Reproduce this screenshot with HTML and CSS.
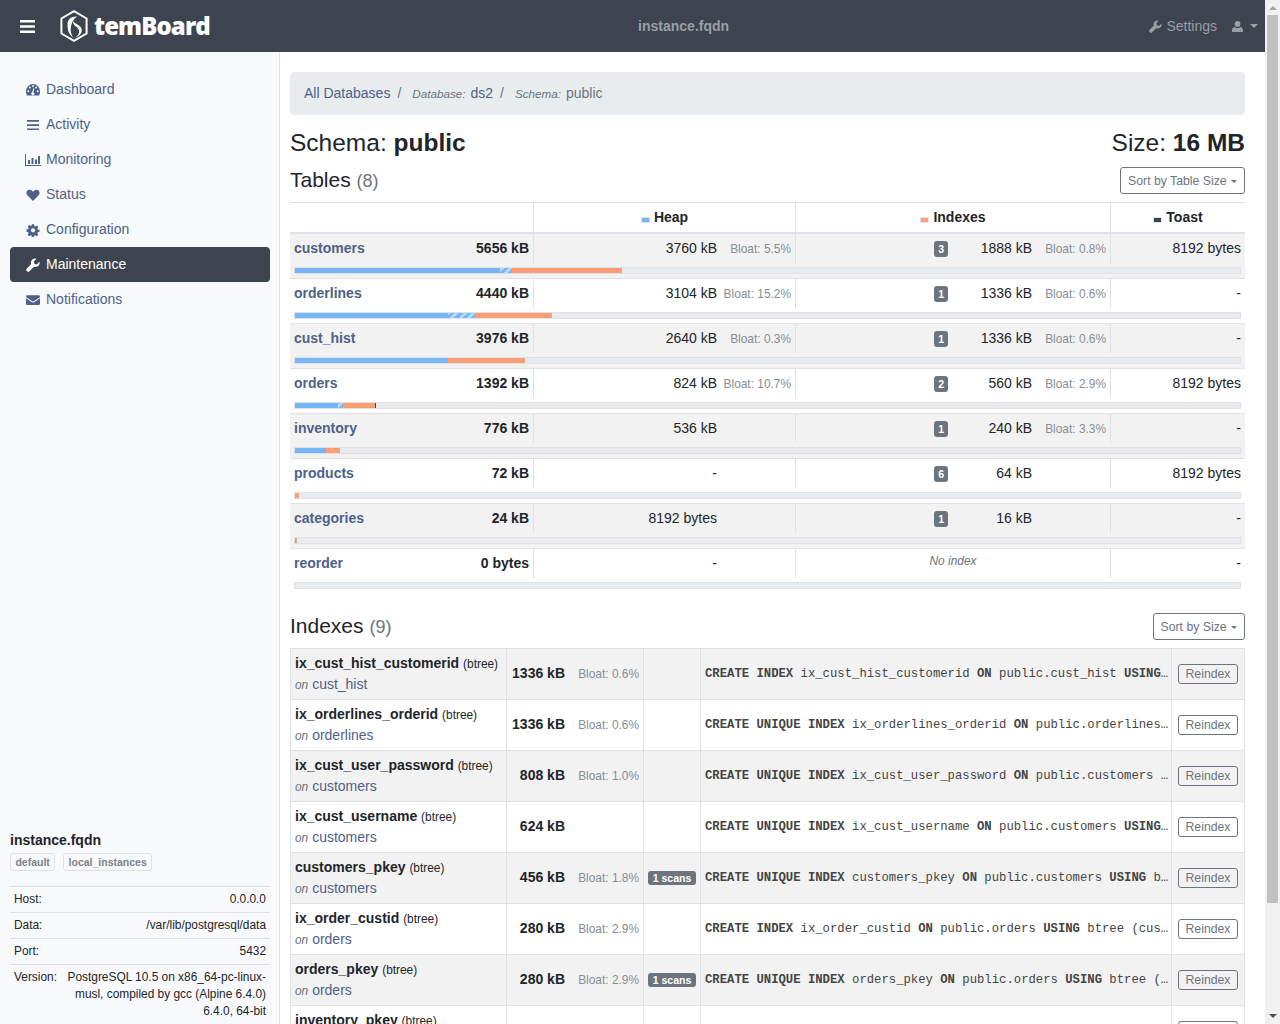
FILE: index.html
```html
<!DOCTYPE html>
<html lang="en">
<head>
  <meta charset="UTF-8">
  <meta name="viewport" content="width=device-width, initial-scale=1.0">
  <link rel="stylesheet" href="styles.css">
  <title>temBoard - Schema public</title>
</head>
<body>
  <div class="page">
    <header class="topbar">
      <svg class="burger" viewBox="0 0 15 13"><path d="M0 0h15v2.6H0zM0 5.2h15v2.6H0zM0 10.4h15V13H0z"/></svg>
      <a class="brand" href="#">
        <svg class="brand-logo" viewBox="0 0 28 32">
          <path class="brand-hex" d="M14 1.2 26.6 8.5v15L14 30.8 1.4 23.500V8.500z"/>
          <path class="brand-swirl" d="M17 6.500C12 6 7.500 9 7.500 14 7.500 19 8 24 13 27.500 11 24 10 20 11 16.500 11.500 13 13 9.500 17 6.500zM13 11C12.500 14.500 16 16 18 18.500 20 21 19.500 25 15 27.500 21 26 23 21 21 17.500 19.500 14.500 14.500 14 13 11z"/>
        </svg>
        <span class="brand-name">temBoard</span>
      </a>
      <span class="topbar-title">instance.fqdn</span>
      <div class="topbar-right">
        <a class="topbar-link" href="#">
          <svg class="icon" viewBox="0 0 16 16"><path d="M15.400 4.300 12.300 7.300 9.700 6.500 8.900 3.900 12 .8A4.800 4.800 0 0 0 5.900 6.900L.8 12a2.200 2.200 0 0 0 3.100 3.100L9 10a4.800 4.800 0 0 0 6.400-5.700z"/></svg>
          Settings
        </a>
        <a class="topbar-user" href="#">
          <svg class="icon" viewBox="0 0 14 14"><path d="M7 0a3.600 3.600 0 0 1 0 7.400A3.600 3.600 0 0 1 7 0zM1 14c-.7 0-1-.4-1-1.100C0 10.400.6 7.900 3.300 7.500 4.200 8.400 5.500 9 7 9s2.800-.6 3.700-1.500c2.700.4 3.300 2.900 3.300 5.400 0 .7-.3 1.100-1 1.100z"/></svg>
          <span class="caret"></span>
        </a>
      </div>
    </header>

    <div class="wrapper">
      <aside class="sidebar">
        <nav class="nav">
          <a href="#"><svg class="icon" viewBox="0.5 1.5 15 13.5" preserveAspectRatio="none"><path fill-rule="evenodd" d="M8 2.500A7.500 7.500 0 0 0 .5 10c0 1.400.4 2.600 1 3.500h13c.6-.9 1-2.100 1-3.500A7.500 7.500 0 0 0 8 2.500zM3 10.500a1 1 0 1 1 0-2 1 1 0 0 1 0 2zm1.600-3.600a1 1 0 1 1 0-2 1 1 0 0 1 0 2zM8 5.500a1 1 0 1 1 0-2 1 1 0 0 1 0 2zm5 5a1 1 0 1 1 0-2 1 1 0 0 1 0 2zM9.600 11.500a1.700 1.700 0 1 1-2.600-1.300l1.700-3.800.9.400-1.400 3.600c.7.100 1.300.600 1.400 1.100zm1.800-4.600a1 1 0 1 1 0-2 1 1 0 0 1 0 2z"/></svg>Dashboard</a>
          <a href="#"><svg class="icon" viewBox="0 0 14 14"><path d="M1 2h12v1.700H1zM1 6.200h12v1.700H1zM1 10.400h12v1.700H1z"/></svg>Activity</a>
          <a href="#"><svg class="icon icon-wide" viewBox="0 0 16 14"><path d="M0 1h1v11h15v1H0zM3 7h2v4H3zM6.500 5h2v6h-2zM10 6.500h2V11h-2zM13 3h2v8h-2z"/></svg>Monitoring</a>
          <a href="#"><svg class="icon" viewBox="0 0 16 16"><path d="M8 14.800 1.900 8.600C.1 6.800 0 4.400 1.300 3 2.700 1.600 5.200 1.600 6.800 3.100L8 4.300l1.200-1.200c1.600-1.500 4.100-1.500 5.500-.1C16 4.400 15.900 6.800 14.100 8.600z"/></svg>Status</a>
          <a href="#"><svg class="icon" viewBox="0 0 16 16"><path fill-rule="evenodd" d="M6.800 1.500h2.400l.4 1.900 1.200.5 1.600-1.100 1.700 1.700-1.100 1.600.5 1.200 1.900.4v2.400l-1.900.4-.5 1.200 1.100 1.600-1.700 1.700-1.600-1.100-1.200.5-.4 1.900H6.800l-.4-1.900-1.200-.5-1.600 1.100-1.700-1.700 1.100-1.600-.5-1.200-1.900-.4V7.200l1.900-.4.500-1.200-1.100-1.600 1.700-1.700 1.600 1.100 1.200-.5zM8 6a2.400 2.400 0 1 0 0 4.800A2.400 2.400 0 0 0 8 6z"/></svg>Configuration</a>
          <a class="active" href="#"><svg class="icon" viewBox="0 0 16 16"><path d="M15.400 4.300 12.300 7.300 9.700 6.500 8.900 3.900 12 .8A4.800 4.800 0 0 0 5.900 6.900L.8 12a2.200 2.200 0 0 0 3.100 3.100L9 10a4.800 4.800 0 0 0 6.400-5.700z"/></svg>Maintenance</a>
          <a href="#"><svg class="icon" viewBox="0 0 16 16"><path d="M1.500 2.500h13c.8 0 1.500.6 1.500 1.300 0 .6-.4 1.100-1 1.500L8.700 9.400c-.4.300-1 .3-1.400 0L1 5.300C.4 4.900 0 4.400 0 3.800c0-.7.700-1.300 1.500-1.300zM0 6l6.700 4.500c.8.500 1.800.5 2.600 0L16 6v6.300c0 .8-.7 1.400-1.500 1.400h-13C.7 13.700 0 13.100 0 12.300z"/></svg>Notifications</a>
        </nav>

        <div class="instance">
          <h6>instance.fqdn</h6>
          <div class="tags">
            <span class="tag">default</span>
            <span class="tag">local_instances</span>
          </div>
          <table class="instance-info">
            <tr><td>Host:</td><td>0.0.0.0</td></tr>
            <tr><td>Data:</td><td>/var/lib/postgresql/data</td></tr>
            <tr><td>Port:</td><td>5432</td></tr>
            <tr><td>Version:</td><td>PostgreSQL 10.5 on x86_64-pc-linux-musl, compiled by gcc (Alpine 6.4.0) 6.4.0, 64-bit</td></tr>
          </table>
        </div>
      </aside>

      <main class="content">
        <ol class="breadcrumb">
          <li><a href="#">All Databases</a></li>
          <li><small>Database:</small> <a href="#">ds2</a></li>
          <li class="current"><small>Schema:</small> public</li>
        </ol>

        <div class="title-row">
          <h2>Schema: <strong>public</strong></h2>
          <h2>Size: <strong>16 MB</strong></h2>
        </div>

        <div class="section-row">
          <h3>Tables <span class="count">(8)</span></h3>
          <button class="sort" type="button">Sort by Table Size <span class="caret"></span></button>
        </div>

        <table class="tables">
          <colgroup>
            <col class="col-table"><col class="col-heap"><col class="col-indexes"><col class="col-toast">
          </colgroup>
          <thead>
            <tr>
              <th></th>
              <th><span class="legend heap"></span>Heap</th>
              <th><span class="legend index"></span>Indexes</th>
              <th><span class="legend toast"></span>Toast</th>
            </tr>
          </thead>
          <tbody>
            <tr>
              <td><div class="table-name"><a href="#">customers</a><strong>5656 kB</strong></div></td>
              <td>3760 kB<span class="bloat">Bloat: 5.5%</span></td>
              <td><span class="badge">3</span><span class="index-size">1888 kB</span><span class="bloat">Bloat: 0.8%</span></td>
              <td>8192 bytes</td>
            </tr>
            <tr class="bar-row"><td colspan="4"><div class="bar">
              <span class="seg heap" style="width:21.7%"></span><span class="seg bloated" style="width:1.25%"></span><span class="seg index" style="width:11.62%"></span>
            </div></td></tr>
          </tbody>
          <tbody>
            <tr>
              <td><div class="table-name"><a href="#">orderlines</a><strong>4440 kB</strong></div></td>
              <td>3104 kB<span class="bloat">Bloat: 15.2%</span></td>
              <td><span class="badge">1</span><span class="index-size">1336 kB</span><span class="bloat">Bloat: 0.6%</span></td>
              <td>-</td>
            </tr>
            <tr class="bar-row"><td colspan="4"><div class="bar">
              <span class="seg heap" style="width:16.15%"></span><span class="seg bloated" style="width:2.85%"></span><span class="seg index" style="width:8.2%"></span>
            </div></td></tr>
          </tbody>
          <tbody>
            <tr>
              <td><div class="table-name"><a href="#">cust_hist</a><strong>3976 kB</strong></div></td>
              <td>2640 kB<span class="bloat">Bloat: 0.3%</span></td>
              <td><span class="badge">1</span><span class="index-size">1336 kB</span><span class="bloat">Bloat: 0.6%</span></td>
              <td>-</td>
            </tr>
            <tr class="bar-row"><td colspan="4"><div class="bar">
              <span class="seg heap" style="width:16.17%"></span><span class="seg index" style="width:8.17%"></span>
            </div></td></tr>
          </tbody>
          <tbody>
            <tr>
              <td><div class="table-name"><a href="#">orders</a><strong>1392 kB</strong></div></td>
              <td>824 kB<span class="bloat">Bloat: 10.7%</span></td>
              <td><span class="badge">2</span><span class="index-size">560 kB</span><span class="bloat">Bloat: 2.9%</span></td>
              <td>8192 bytes</td>
            </tr>
            <tr class="bar-row"><td colspan="4"><div class="bar">
              <span class="seg heap" style="width:4.5%"></span><span class="seg bloated" style="width:.53%"></span><span class="seg index" style="width:3.42%"></span><span class="seg toast" style="width:.1%"></span>
            </div></td></tr>
          </tbody>
          <tbody>
            <tr>
              <td><div class="table-name"><a href="#">inventory</a><strong>776 kB</strong></div></td>
              <td>536 kB<span class="bloat"></span></td>
              <td><span class="badge">1</span><span class="index-size">240 kB</span><span class="bloat">Bloat: 3.3%</span></td>
              <td>-</td>
            </tr>
            <tr class="bar-row"><td colspan="4"><div class="bar">
              <span class="seg heap" style="width:3.27%"></span><span class="seg index" style="width:1.46%"></span>
            </div></td></tr>
          </tbody>
          <tbody>
            <tr>
              <td><div class="table-name"><a href="#">products</a><strong>72 kB</strong></div></td>
              <td>-<span class="bloat"></span></td>
              <td><span class="badge">6</span><span class="index-size">64 kB</span><span class="bloat"></span></td>
              <td>8192 bytes</td>
            </tr>
            <tr class="bar-row"><td colspan="4"><div class="bar">
              <span class="seg index" style="width:.42%"></span>
            </div></td></tr>
          </tbody>
          <tbody>
            <tr>
              <td><div class="table-name"><a href="#">categories</a><strong>24 kB</strong></div></td>
              <td>8192 bytes<span class="bloat"></span></td>
              <td><span class="badge">1</span><span class="index-size">16 kB</span><span class="bloat"></span></td>
              <td>-</td>
            </tr>
            <tr class="bar-row"><td colspan="4"><div class="bar">
              <span class="seg heap" style="width:.1%"></span><span class="seg index" style="width:.1%"></span>
            </div></td></tr>
          </tbody>
          <tbody>
            <tr>
              <td><div class="table-name"><a href="#">reorder</a><strong>0 bytes</strong></div></td>
              <td>-<span class="bloat"></span></td>
              <td class="no-index"><em>No index</em></td>
              <td>-</td>
            </tr>
            <tr class="bar-row"><td colspan="4"><div class="bar"></div></td></tr>
          </tbody>
        </table>

        <div class="section-row indexes-title">
          <h3>Indexes <span class="count">(9)</span></h3>
          <button class="sort" type="button">Sort by Size <span class="caret"></span></button>
        </div>

        <table class="indexes">
          <colgroup>
            <col class="col-name"><col class="col-size"><col class="col-scans"><col class="col-def"><col class="col-action">
          </colgroup>
          <tr>
            <td><strong>ix_cust_hist_customerid</strong> <small>(btree)</small><br><small class="on">on</small> <a href="#">cust_hist</a></td>
            <td class="size"><strong>1336 kB</strong><span class="bloat">Bloat: 0.6%</span></td>
            <td class="scans"></td>
            <td class="def"><b>CREATE INDEX</b> ix_cust_hist_customerid <b>ON</b> public.cust_hist <b>USING</b> btree (customerid)</td>
            <td class="action"><button class="reindex" type="button">Reindex</button></td>
          </tr>
          <tr>
            <td><strong>ix_orderlines_orderid</strong> <small>(btree)</small><br><small class="on">on</small> <a href="#">orderlines</a></td>
            <td class="size"><strong>1336 kB</strong><span class="bloat">Bloat: 0.6%</span></td>
            <td class="scans"></td>
            <td class="def"><b>CREATE UNIQUE INDEX</b> ix_orderlines_orderid <b>ON</b> public.orderlines <b>USING</b> btree (orderid)</td>
            <td class="action"><button class="reindex" type="button">Reindex</button></td>
          </tr>
          <tr>
            <td><strong>ix_cust_user_password</strong> <small>(btree)</small><br><small class="on">on</small> <a href="#">customers</a></td>
            <td class="size"><strong>808 kB</strong><span class="bloat">Bloat: 1.0%</span></td>
            <td class="scans"></td>
            <td class="def"><b>CREATE UNIQUE INDEX</b> ix_cust_user_password <b>ON</b> public.customers <b>USING</b> btree (username, password)</td>
            <td class="action"><button class="reindex" type="button">Reindex</button></td>
          </tr>
          <tr>
            <td><strong>ix_cust_username</strong> <small>(btree)</small><br><small class="on">on</small> <a href="#">customers</a></td>
            <td class="size"><strong>624 kB</strong><span class="bloat"></span></td>
            <td class="scans"></td>
            <td class="def"><b>CREATE UNIQUE INDEX</b> ix_cust_username <b>ON</b> public.customers <b>USING</b> btree (username)</td>
            <td class="action"><button class="reindex" type="button">Reindex</button></td>
          </tr>
          <tr>
            <td><strong>customers_pkey</strong> <small>(btree)</small><br><small class="on">on</small> <a href="#">customers</a></td>
            <td class="size"><strong>456 kB</strong><span class="bloat">Bloat: 1.8%</span></td>
            <td class="scans"><span class="badge">1 scans</span></td>
            <td class="def"><b>CREATE UNIQUE INDEX</b> customers_pkey <b>ON</b> public.customers <b>USING</b> btree (customerid)</td>
            <td class="action"><button class="reindex" type="button">Reindex</button></td>
          </tr>
          <tr>
            <td><strong>ix_order_custid</strong> <small>(btree)</small><br><small class="on">on</small> <a href="#">orders</a></td>
            <td class="size"><strong>280 kB</strong><span class="bloat">Bloat: 2.9%</span></td>
            <td class="scans"></td>
            <td class="def"><b>CREATE INDEX</b> ix_order_custid <b>ON</b> public.orders <b>USING</b> btree (customerid)</td>
            <td class="action"><button class="reindex" type="button">Reindex</button></td>
          </tr>
          <tr>
            <td><strong>orders_pkey</strong> <small>(btree)</small><br><small class="on">on</small> <a href="#">orders</a></td>
            <td class="size"><strong>280 kB</strong><span class="bloat">Bloat: 2.9%</span></td>
            <td class="scans"><span class="badge">1 scans</span></td>
            <td class="def"><b>CREATE UNIQUE INDEX</b> orders_pkey <b>ON</b> public.orders <b>USING</b> btree (orderid)</td>
            <td class="action"><button class="reindex" type="button">Reindex</button></td>
          </tr>
          <tr>
            <td><strong>inventory_pkey</strong> <small>(btree)</small><br><small class="on">on</small> <a href="#">inventory</a></td>
            <td class="size"><strong>240 kB</strong><span class="bloat">Bloat: 3.3%</span></td>
            <td class="scans"></td>
            <td class="def"><b>CREATE UNIQUE INDEX</b> inventory_pkey <b>ON</b> public.inventory <b>USING</b> btree (prod_id)</td>
            <td class="action"><button class="reindex" type="button">Reindex</button></td>
          </tr>
        </table>
      </main>
    </div>
  </div>

  <div class="scrollbar">
    <span class="arrow arrow-up"></span>
    <div class="scroll-track"><div class="scroll-thumb"></div></div>
    <span class="arrow arrow-down"></span>
  </div>
</body>
</html>
```

FILE: styles.css
```css
html,
body {
  height: 100%;
  overflow: hidden;
}

body {
  display: flex;
  font-family: "Liberation Sans", Arial, sans-serif;
  font-size: 14px;
  line-height: 1.5;
  color: #212529;
  margin: 0;
  background-color: #fff;
}

a {
  color: #4e6189;
  text-decoration: none;
}

small {
  font-size: 11.9px;
}

.icon {
  width: 14px;
  height: 14px;
  fill: currentColor;
  flex: none;
}

.icon-wide {
  width: 16px;
  margin: 0 -1px;
}

.caret {
  display: inline-block;
  border-top: 4px solid currentColor;
  border-left: 4px solid transparent;
  border-right: 4px solid transparent;
  vertical-align: middle;
}

.page {
  flex: 1;
  min-width: 0;
  height: 100%;
  overflow: hidden;
}

/* fake browser scrollbar */
.scrollbar {
  display: flex;
  flex-direction: column;
  align-items: center;
  flex: none;
  width: 15px;
  background-color: #f1f1f1;
}

.scroll-track {
  flex: 1;
  width: 100%;
  box-sizing: border-box;
  padding: 0 2px;
}

.scroll-thumb {
  height: 888px;
  background-color: #c1c1c1;
}

.arrow {
  display: block;
  flex: none;
  width: 0;
  border-left: 4px solid transparent;
  border-right: 4px solid transparent;
}

.arrow-up {
  margin: 6px 0 5px;
  border-bottom: 4px solid #a3a3a3;
}

.arrow-down {
  margin: 5px 0 6px;
  border-top: 4px solid #505050;
}

/* top bar */
.topbar {
  display: flex;
  align-items: center;
  height: 52px;
  padding: 0 7px 0 20px;
  background-color: #3d434f;
  color: #9b9ea5;
}

.burger {
  width: 15px;
  height: 13px;
  fill: #fff;
  margin-right: 25px;
}

.brand {
  display: flex;
  align-items: center;
  color: #fff;
}

.brand-logo {
  width: 28px;
  height: 32px;
  margin-right: 6px;
}

.brand-hex {
  fill: none;
  stroke: #fff;
  stroke-width: 2;
  stroke-linejoin: round;
}

.brand-swirl {
  fill: #fff;
}

.brand-name {
  font-family: "Open Sans", sans-serif;
  font-size: 24px;
  font-weight: 800;
  letter-spacing: -.9px;
}

.topbar-title {
  margin-left: auto;
  padding-left: 8px;
  font-weight: bold;
}

.topbar-right {
  display: flex;
  align-items: center;
  margin-left: auto;
}

.topbar-link,
.topbar-user {
  display: flex;
  align-items: center;
  color: #9b9ea5;
}

.topbar-link .icon {
  width: 13px;
  height: 13px;
  margin-right: 4px;
}

.topbar-user {
  margin-left: 15px;
}

.topbar-user .icon {
  width: 11px;
  height: 11px;
  margin-right: 7px;
}

/* sidebar */
.wrapper {
  display: flex;
}

.sidebar {
  display: flex;
  flex-direction: column;
  width: 280px;
  height: 972px;
  flex: none;
  box-sizing: border-box;
  padding: 20px 9px 0 10px;
  background-color: #f8f9fa;
  border-right: 1px solid #dee2e6;
  overflow: hidden;
}

.nav a {
  display: flex;
  align-items: center;
  gap: 6px;
  height: 35px;
  padding: 0 16px;
  border-radius: 4px;
}

.nav a.active {
  background-color: #3d434f;
  color: #fff;
}

.instance {
  margin-top: auto;
}

.instance h6 {
  margin: 0;
  font-size: 14px;
  line-height: 21px;
}

.tags {
  display: flex;
  gap: 8px;
  margin: 2px 0 15px;
}

.tag {
  padding: 0 4.4px;
  font-size: 10.5px;
  line-height: 16px;
  font-weight: bold;
  color: #7d8389;
  border: 1px solid #dee2e6;
  border-radius: 3px;
}

.instance-info {
  width: 100%;
  border-collapse: collapse;
  font-size: 11.9px;
  line-height: 17px;
}

.instance-info td {
  padding: 4px;
  border-top: 1px solid #dee2e6;
  vertical-align: top;
}

.instance-info td:last-child {
  text-align: right;
}

/* content */
.content {
  flex: 1;
  min-width: 0;
  padding: 20px 20px 30px 10px;
}

.breadcrumb {
  display: flex;
  margin: 0 0 12px;
  padding: 10px 14px;
  list-style: none;
  background-color: #e9ecef;
  border-radius: 4px;
  color: #6c757d;
  line-height: 22px;
}

.breadcrumb li + li::before {
  content: "/";
  padding: 0 11px 0 7px;
}

.breadcrumb small {
  margin-right: 1px;
  font-size: 11.7px;
  font-style: italic;
}

.title-row,
.section-row {
  display: flex;
  justify-content: space-between;
  align-items: center;
}

h2 {
  margin: 0;
  font-size: 24.5px;
  font-weight: normal;
  line-height: 32px;
}

h3 {
  margin: 0;
  font-size: 21px;
  font-weight: normal;
  line-height: 27px;
}

.section-row {
  margin: 7px 0 7px;
}

.count {
  font-size: 18px;
  color: #6c757d;
}

.sort {
  height: 27px;
  padding: 0 7px;
  font: 12.25px "Liberation Sans", Arial, sans-serif;
  color: #6c757d;
  background: #fff;
  border: 1px solid #6c757d;
  border-radius: 3px;
}

.sort .caret {
  margin-left: 1px;
  border-width: 3.5px 3.5px 0;
}

/* tables */
.tables,
.indexes {
  width: 100%;
  table-layout: fixed;
  border-spacing: 0;
}

.col-table { width: 243px; }
.col-heap { width: 262px; }
.col-indexes { width: 315px; }

.tables th {
  height: 29px;
  padding: 0 4px;
  text-align: center;
  border-top: 1px solid #dee2e6;
  border-bottom: 2px solid #dee2e6;
  border-left: 1px solid #dee2e6;
}

.tables th:first-child {
  border-left: 0;
}

.legend {
  display: inline-block;
  box-sizing: border-box;
  width: 9px;
  height: 6px;
  margin-right: 4px;
  border: 1px solid #dfe4ea;
  vertical-align: -1px;
}

.legend.heap { background-color: #75b5f8; }
.legend.index { background-color: #ff9e75; }
.legend.toast { background-color: #3d434f; }

.tables td {
  padding: 4px;
  text-align: right;
  vertical-align: top;
  border-left: 1px solid #dee2e6;
}

.tables td:first-child {
  border-left: 0;
}

.tables tbody + tbody tr:first-child td {
  border-top: 1px solid #dee2e6;
}

.tables tbody:nth-of-type(odd) {
  background-color: #f2f2f2;
}

.table-name {
  display: flex;
  justify-content: space-between;
  font-weight: bold;
}

.bloat {
  display: inline-block;
  width: 74px;
  font-size: 11.9px;
  color: #868e96;
  text-align: right;
}

.badge {
  display: inline-block;
  padding: 0 4.4px;
  font-size: 10.5px;
  font-weight: bold;
  line-height: 14px;
  color: #fff;
  background-color: #6c757d;
  border-radius: 3px;
}

.tables .badge {
  padding: 0 4px;
  line-height: 16px;
}

.index-size {
  display: inline-block;
  width: 84px;
}

.tables td.no-index {
  text-align: center;
  font-size: 11.9px;
  color: #6c757d;
}

.tables .bar-row td {
  padding: 4px;
  border-left: 0;
  line-height: 0;
}

.bar {
  display: flex;
  box-sizing: border-box;
  height: 7px;
  background-color: #e9ecef;
  border: 1px solid #dee2e6;
}

.seg {
  display: block;
  height: 100%;
}

.seg.heap { background-color: #75b5f8; }
.seg.index { background-color: #ff9e75; }
.seg.toast { background-color: #3d434f; }

.seg.bloated {
  background-image: repeating-linear-gradient(-45deg, #75b5f8 0 3px, #b5d8fb 3px 6px);
}

/* indexes */
.indexes-title {
  margin-top: 19px;
}

.col-name { width: 216px; }
.col-size { width: 137px; }
.col-scans { width: 57px; }
.col-action { width: 73px; }

.indexes {
  border-top: 1px solid #dee2e6;
  border-left: 1px solid #dee2e6;
}

.indexes td {
  height: 42px;
  padding: 4px;
  border-right: 1px solid #dee2e6;
  border-bottom: 1px solid #dee2e6;
  vertical-align: middle;
}

.indexes tr:nth-child(odd) {
  background-color: #f2f2f2;
}

.indexes .on {
  font-style: italic;
  color: #6c757d;
}

.indexes .size,
.indexes .scans {
  padding-top: 3px;
  padding-bottom: 5px;
}

.indexes .size {
  text-align: right;
}

.indexes .scans {
  text-align: center;
}

.indexes .def {
  padding-right: 2px;
  font-family: "Liberation Mono", monospace;
  font-size: 12.25px;
  color: #444;
  white-space: nowrap;
  overflow: hidden;
  text-overflow: ellipsis;
}

.reindex {
  display: block;
  height: 20px;
  margin: 0 auto;
  padding: 0 7px;
  font: 12.25px "Liberation Sans", Arial, sans-serif;
  color: #6c757d;
  background: transparent;
  border: 1px solid #6c757d;
  border-radius: 3px;
}
```
